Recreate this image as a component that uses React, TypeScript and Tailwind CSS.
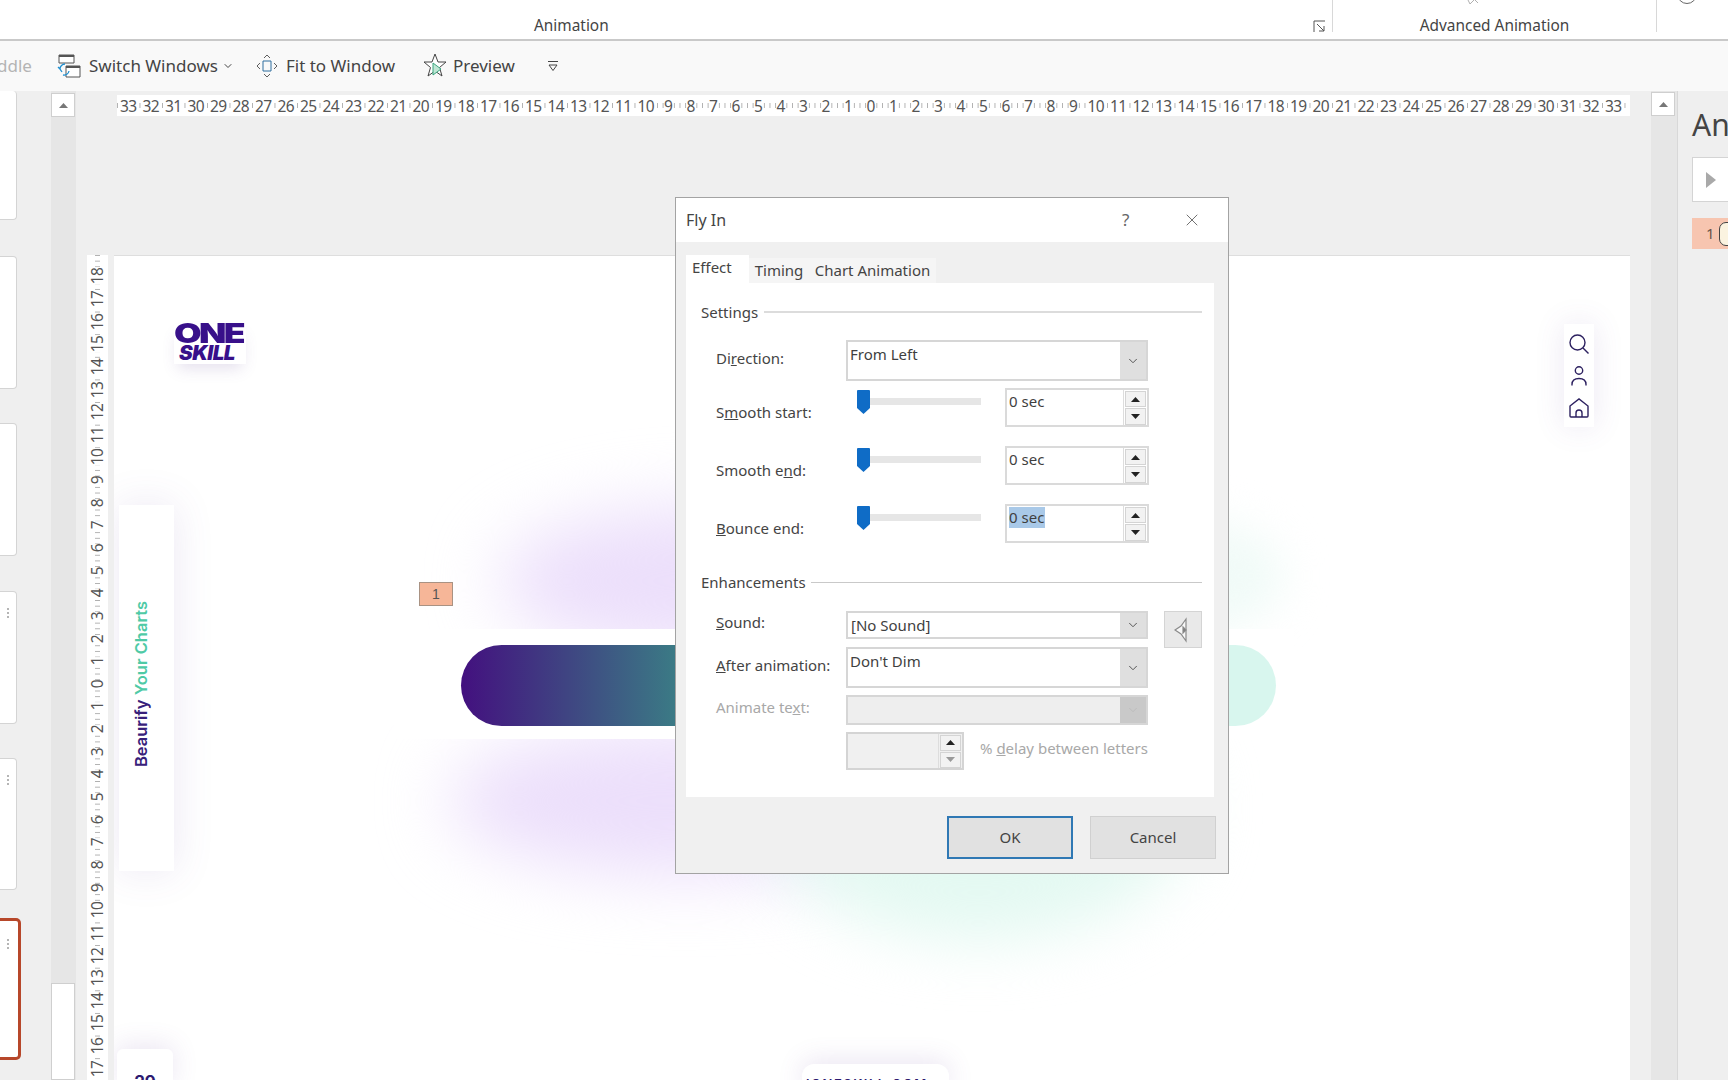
import React from 'react';
import { ChevronDown, X } from 'lucide-react';

const hRuler = [
  33, 32, 31, 30, 29, 28, 27, 26, 25, 24, 23, 22, 21, 20, 19, 18, 17, 16, 15, 14, 13, 12, 11, 10, 9, 8, 7, 6, 5, 4, 3, 2, 1,
  0, 1, 2, 3, 4, 5, 6, 7, 8, 9, 10, 11, 12, 13, 14, 15, 16, 17, 18, 19, 20, 21, 22, 23, 24, 25, 26, 27, 28, 29, 30, 31, 32, 33,
];
const vRuler = [18, 17, 16, 15, 14, 13, 12, 11, 10, 9, 8, 7, 6, 5, 4, 3, 2, 1, 0, 1, 2, 3, 4, 5, 6, 7, 8, 9, 10, 11, 12, 13, 14, 15, 16, 17];

function Triangle({ up, className }: { up?: boolean; className?: string }) {
  return (
    <svg width="9" height="5" viewBox="0 0 9 5" className={className}>
      <path d={up ? 'M4.5 0L9 5H0z' : 'M0 0h9L4.5 5z'} fill="currentColor" />
    </svg>
  );
}

function Combo({ text, tall, disabled }: { text?: string; tall?: boolean; disabled?: boolean }) {
  return (
    <div className={`flex w-[302px] shrink-0 border-2 border-[#d6d6d6] ${disabled ? 'bg-[#eeeeee]' : 'bg-white'} ${tall ? 'h-[41px]' : disabled ? 'h-[30px]' : 'h-[28px]'}`}>
      <div className={`flex-1 text-[15px] text-[#3f3f3f] ${tall ? 'pl-[2px] pt-[1px]' : 'pl-[3px] leading-[24px]'}`}>{text}</div>
      <div className={`flex w-[26px] items-center justify-center ${disabled ? 'bg-[#c9c9c9] text-[#bcbcbc]' : 'bg-[#dfdfdf] text-[#555555]'}`}>
        <ChevronDown size={14} strokeWidth={1.7} />
      </div>
    </div>
  );
}

function SpinButtons({ disabled }: { disabled?: boolean }) {
  return (
    <div className="flex w-[24px] flex-col gap-[1px] border-l border-[#dddddd] pt-[1px] pl-[1px]">
      <div className="flex h-[16px] w-[21px] items-center justify-center border border-[#d4d4d4] bg-[#f2f2f2] text-[#222222]">
        <Triangle up />
      </div>
      <div className={`flex h-[17px] w-[21px] items-center justify-center border border-[#d4d4d4] bg-[#f2f2f2] ${disabled ? 'text-[#999999]' : 'text-[#222222]'}`}>
        <Triangle />
      </div>
    </div>
  );
}

function SliderRow({ label, selected, className }: { label: React.ReactNode; selected?: boolean; className?: string }) {
  return (
    <div className={`flex h-[39px] ${className ?? ''}`}>
      <div className="w-[161px] pl-[30px] pt-[13px] text-[15px] leading-[22px] whitespace-nowrap text-[#444444]">{label}</div>
      <div className="flex w-[158px] items-start pl-[10px] pt-[2px]">
        <svg width="13" height="24" viewBox="0 0 13 24" className="shrink-0">
          <path d="M1 0h11a1 1 0 0 1 1 1v17l-6.5 6L0 18V1a1 1 0 0 1 1-1z" fill="#0f6cc6" />
        </svg>
        <div className="mt-[8px] h-[7px] w-[111px] bg-[#e6e6e6]" />
      </div>
      <div className="flex h-[39px] w-[144px] border-2 border-[#dadada] bg-white">
        <div className="flex-1 pl-[2px] pt-[1px] text-[15px] leading-[21px] text-[#3f3f3f]">
          <span className={selected ? 'inline-block bg-[#a9c9e8] pr-[1px]' : ''}>0 sec</span>
        </div>
        <SpinButtons />
      </div>
    </div>
  );
}

function Dialog() {
  return (
    <div className="absolute left-[675px] top-[197px] flex h-[677px] w-[554px] flex-col border border-[#a3a3a3] bg-[#f0f0f0] font-['Noto_Sans',sans-serif]">
      <div className="flex h-[44px] shrink-0 items-center bg-white pl-[10px] text-[#444444]">
        <div className="w-[436px] text-[16px]">Fly In</div>
        <div className="w-[60px] text-[17px] text-[#666666]">?</div>
        <X size={20} strokeWidth={1} className="text-[#555555]" />
      </div>
      <div className="flex flex-1 flex-col pl-[10px]">
        <div className="mt-[13px] flex h-[28px] items-end text-[15px] text-[#444444]">
          <div className="flex h-[28px] w-[63px] items-center bg-white pb-[3px] pl-[6px]">Effect</div>
          <div className="flex h-[25px] w-[60px] items-center justify-center bg-[#f5f5f5] pb-[1px]">Timing</div>
          <div className="flex h-[25px] w-[127px] items-center justify-center bg-[#f5f5f5] pb-[1px]">Chart Animation</div>
        </div>
        <div className="h-[514px] w-[528px] bg-white pt-[19px] text-[15px] text-[#444444]">
          <div className="flex h-[20px] items-center pl-[15px]">
            <span>Settings</span>
            <div className="ml-[6px] mr-[12px] h-[2px] flex-1 bg-[#dcdcdc]" />
          </div>
          <div className="mt-[18px] flex">
            <div className="w-[160px] pl-[30px] pt-[7px] leading-[22px] whitespace-nowrap">
              Di<u>r</u>ection:
            </div>
            <Combo text="From Left" tall />
          </div>
          <SliderRow className="mt-[7px]" label={<>S<u>m</u>ooth start:</>} />
          <SliderRow className="mt-[19px]" label={<>Smooth e<u>n</u>d:</>} />
          <SliderRow className="mt-[19px]" label={<><u>B</u>ounce end:</>} selected />
          <div className="mt-[29px] flex h-[20px] items-center pl-[15px]">
            <span>Enhancements</span>
            <div className="ml-[5px] mr-[12px] h-[1px] flex-1 bg-[#c9c9c9]" />
          </div>
          <div className="mt-[19px] flex h-[28px] items-start">
            <div className="w-[160px] pl-[30px] leading-[22px] whitespace-nowrap">
              <u>S</u>ound:
            </div>
            <Combo text="[No Sound]" />
            <div className="ml-[16px] flex h-[37px] w-[38px] shrink-0 items-center justify-center border border-[#d4d4d4] bg-[#e9e9e9]">
              <svg width="18" height="26" viewBox="0 0 18 26" fill="none" stroke="#8a8a8a" strokeWidth="1.2">
                <path d="M1 13l6-4 5-7v22l-5-7z" fill="#f7f7f7" />
                <path d="M9 10l3 3-3 3z" fill="#777777" />
              </svg>
            </div>
          </div>
          <div className="mt-[8px] flex">
            <div className="w-[160px] pl-[30px] pt-[7px] leading-[22px] whitespace-nowrap">
              <u>A</u>fter animation:
            </div>
            <Combo text="Don't Dim" tall />
          </div>
          <div className="mt-[7px] flex">
            <div className="w-[160px] pl-[30px] pt-[1px] leading-[22px] whitespace-nowrap text-[#a8a8a8]">
              Animate te<u>x</u>t:
            </div>
            <Combo disabled />
          </div>
          <div className="mt-[7px] flex">
            <div className="ml-[160px] flex h-[38px] w-[118px] border-2 border-[#d4d4d4] bg-[#f0f0f0]">
              <div className="flex-1" />
              <SpinButtons disabled />
            </div>
            <div className="ml-[16px] pt-[5px] leading-[22px] whitespace-nowrap text-[#a8a8a8]">
              % <u>d</u>elay between letters
            </div>
          </div>
        </div>
        <div className="mt-[19px] flex w-[530px] justify-end gap-[17px] text-[15px] text-[#444444]">
          <div className="flex h-[43px] w-[126px] items-center justify-center border-2 border-[#2f78b4] bg-[#e1e1e1]">OK</div>
          <div className="flex h-[43px] w-[126px] items-center justify-center border border-[#d0d0d0] bg-[#e1e1e1]">Cancel</div>
        </div>
      </div>
    </div>
  );
}

function Slide() {
  return (
    <div className="relative flex-1 overflow-hidden border-t border-[#dedede] bg-white font-['Inter',sans-serif]">
      {/* soft glows behind the pill */}
      <div className="absolute left-[385px] top-[250px] h-[150px] w-[420px] rounded-[50%] bg-[#ecdffb] blur-[34px]" />
      <div className="absolute left-[335px] top-[470px] h-[150px] w-[470px] rounded-[50%] bg-[#ecdffb] blur-[34px]" />
      <div className="absolute left-[650px] top-[420px] h-[265px] w-[430px] rounded-[50%] bg-[#e4f9f2] blur-[30px]" />
      <div className="absolute left-[1000px] top-[265px] h-[110px] w-[170px] rounded-[50%] bg-[#f1fbf8] blur-[20px]" />
      <div className="absolute left-[280px] top-[373px] h-[110px] w-[900px] bg-white" />
      <div className="absolute left-[347px] top-[389px] h-[81px] w-[815px] rounded-full bg-[linear-gradient(90deg,#43107f_0%,#3b7985_26%,#d8f6ee_94%,#d8f6ee_100%)]" />

      <div className="absolute left-[305px] top-[326px] flex h-[24px] w-[34px] items-center justify-center border border-[#a99283] bg-[#f6b698] font-['Liberation_Sans',sans-serif] text-[14px] text-[#555555]">1</div>

      <div className="absolute left-[60px] top-[68px] h-[40px] w-[72px] shadow-[0_8px_16px_-4px_rgba(100,70,150,0.18)]">
        <div className="-mt-[2px] h-[21px] origin-left scale-x-[1.32] text-[27px] leading-[24px] font-black tracking-[-2px] text-[#38108a]">ONE</div>
        <div className="ml-[5px] h-[18px] text-[20.500px] leading-[20px] font-black italic tracking-[-0.5px] text-[#38108a]">SKILL</div>
      </div>

      <div className="absolute left-[5px] top-[249px] flex h-[366px] w-[55px] items-center justify-center bg-white shadow-[0_0_40px_rgba(110,80,160,0.13)]">
        <div className="-translate-x-[5px] -translate-y-[4px] rotate-180 text-[16.5px] font-semibold whitespace-nowrap text-[#37207a] [writing-mode:vertical-rl]">
          Beaurify <span className="text-[#4fcaa6]">Your Charts</span>
        </div>
      </div>

      <div className="absolute left-[1450px] top-[68px] flex h-[103px] w-[30px] flex-col items-center gap-[12px] bg-white pt-[10px] shadow-[0_0_30px_rgba(110,80,160,0.13)]">
        <svg width="20" height="20" viewBox="0 0 20 20" fill="none" stroke="#2d2160" strokeWidth="1.4">
          <circle cx="8.5" cy="8.5" r="7.5" />
          <path d="M14 14l5.500 5.500" />
        </svg>
        <svg width="16" height="20" viewBox="0 0 16 20" fill="none" stroke="#2d2160" strokeWidth="1.4">
          <circle cx="8" cy="4.500" r="3.700" />
          <path d="M1 19.500v-1c0-4 3-6 7-6s7 2 7 6v1" />
        </svg>
        <svg width="20" height="20" viewBox="0 0 20 20" fill="none" stroke="#2d2160" strokeWidth="1.4">
          <path d="M1 8l9-7 9 7v10a1 1 0 0 1-1 1H2a1 1 0 0 1-1-1z" />
          <path d="M7 19v-4a3 3 0 0 1 6 0v4" />
        </svg>
      </div>

      <div className="absolute left-[3px] top-[793px] h-[40px] w-[56px] rounded-t-md bg-white text-center text-[17px] leading-[66px] font-bold text-[#2d1a70] shadow-[0_-4px_26px_rgba(110,80,160,0.14)]">29</div>
      <div className="absolute left-[688px] top-[808px] h-[30px] w-[147px] rounded-t-xl bg-white pt-[9px] text-[13px] leading-[22px] font-semibold tracking-[1.5px] whitespace-nowrap text-[#2d1a70] shadow-[0_-4px_26px_rgba(110,80,160,0.14)]">JONESKILL.COM</div>
    </div>
  );
}

function Thumb({ height, top, first, dots }: { height: string; top: string; first?: boolean; dots?: boolean }) {
  return (
    <div className={`${height} ${top} w-[17px] rounded-r-[4px] border border-l-0 ${first ? 'border-t-0' : ''} border-[#d4d4d4] bg-white pl-[7px] pt-[16px]`}>
      {dots && (
        <div className="flex flex-col gap-[2px]">
          <div className="h-[2px] w-[2px] bg-[#b5b5b5]" />
          <div className="h-[2px] w-[2px] bg-[#b5b5b5]" />
          <div className="h-[2px] w-[2px] bg-[#b5b5b5]" />
        </div>
      )}
    </div>
  );
}

export default function App() {
  return (
    <div className="relative flex h-[1080px] w-[1728px] flex-col overflow-hidden bg-[#efefef] font-['Noto_Sans',sans-serif] text-[#444444]">
      {/* ribbon */}
      <div className="flex h-[39px] shrink-0 bg-white text-[15.4px]">
        <div className="flex w-[1332px] items-start">
          <div className="ml-[534px] pt-[15px] leading-[22px]">Animation</div>
          <svg width="13" height="13" viewBox="0 0 13 13" fill="none" stroke="#555555" className="ml-auto mr-[6px] mt-[20px]">
            <path d="M1 12V1h11" />
            <path d="M4 4l7 7M11 6v5H6" />
          </svg>
        </div>
        <div className="relative h-[32px] w-[325px] border-x border-[#d8d8d8] pt-[15px] text-center leading-[22px]">
          Advanced Animation
          <svg width="16" height="6" viewBox="0 0 16 6" fill="none" stroke="#b0b0b0" className="absolute left-[132px] top-0">
            <path d="M3 0l2 4 4-4M10 0l3 3" />
          </svg>
        </div>
        <div className="ml-[20px] -mt-[16px] h-[20px] w-[20px] rounded-full border border-[#666666]" />
      </div>
      <div className="h-[2px] shrink-0 bg-[#c9c9c9]" />

      {/* quick access */}
      <div className="flex h-[50px] shrink-0 items-center bg-[#f9f9f9] text-[17px] text-[#444444]">
        <span className="-ml-[3px] w-[60px] text-[#b4b4b4]">ddle</span>
        <svg width="24" height="24" viewBox="0 0 24 24" fill="none" className="shrink-0">
          <path d="M2 1h15v8H2z" fill="#ffffff" stroke="#555555" />
          <path d="M2 1h15v2H2z" fill="#555555" />
          <path d="M9 12h14v11H9z" fill="#ffffff" stroke="#555555" />
          <path d="M9 12h14v2H9z" fill="#555555" />
          <path d="M8 10a5 5 0 0 0-5 5l2 3M3 15l-2-2M6 21a5 5 0 0 0 6-4" stroke="#1f8fd0" strokeWidth="1.3" />
        </svg>
        <span className="ml-[8px]">Switch Windows</span>
        <ChevronDown size={12} className="ml-[4px]" />
        <svg width="22" height="24" viewBox="0 0 22 24" fill="none" stroke="#5e5e5e" className="ml-[22px] shrink-0">
          <path d="M7 7h8v10H7z" stroke="#2f6f9f" />
          <path d="M8 4l3-3 3 3M8 20l3 3 3-3M4 9l-3 3 3 3M18 9l3 3-3 3" />
        </svg>
        <span className="ml-[8px]">Fit to Window</span>
        <svg width="24" height="26" viewBox="0 0 24 26" fill="none" className="ml-[28px] shrink-0">
          <path d="M12 1l3 8h8l-6.500 5.500L19 23l-7-5-7 5 2.500-8.500L1 9h8z" fill="#ffffff" stroke="#444444" />
          <path d="M10 10v12l8-6z" fill="#bfe6d4" stroke="#3aa57e" />
        </svg>
        <span className="ml-[6px]">Preview</span>
        <svg width="10" height="12" viewBox="0 0 10 12" className="ml-[33px]" fill="none" stroke="#444444">
          <path d="M0 1.500h10M1 5h8L5 10.500z" />
        </svg>
      </div>

      {/* work area */}
      <div className="flex min-h-0 flex-1">
        <div className="flex w-[51px] shrink-0 flex-col">
          <Thumb height="h-[129px]" top="" first />
          <Thumb height="h-[133px]" top="mt-[36px]" />
          <Thumb height="h-[133px]" top="mt-[34px]" />
          <Thumb height="h-[133px]" top="mt-[35px]" dots />
          <Thumb height="h-[132px]" top="mt-[34px]" dots />
          <div className="mt-[28px] h-[142px] w-[21px] rounded-r-[5px] border-[3px] border-l-0 border-[#b7472a] bg-white pl-[7px] pt-[18px]">
            <div className="flex flex-col gap-[2px]">
              <div className="h-[2px] w-[2px] bg-[#b5b5b5]" />
              <div className="h-[2px] w-[2px] bg-[#b5b5b5]" />
              <div className="h-[2px] w-[2px] bg-[#b5b5b5]" />
            </div>
          </div>
        </div>
        <div className="flex w-[25px] shrink-0 flex-col bg-[#e6e6e6] pt-[2px]">
          <div className="flex h-[24px] w-[24px] items-center justify-center border border-[#cfcfcf] bg-white text-[#777777]">
            <Triangle up />
          </div>
          <div className="flex-1" />
          <div className="h-[97px] w-[24px] border border-[#cfcfcf] bg-white" />
        </div>

        <div className="flex w-[1575px] shrink-0 flex-col">
          <div className="ml-[41px] mt-[4px] flex h-[21px] w-[1513px] shrink-0 items-center bg-white bg-[linear-gradient(90deg,#b0b0b0_1px,transparent_1px)] bg-[length:5.625px_5px] bg-[position:0_center] text-[15.500px] tracking-[-0.6px] text-[#555555] [background-repeat:repeat-x]">
            {hRuler.map((n, i) => (
              <div key={i} className="flex w-[22.5px] shrink-0 justify-center">
                <span className="bg-white leading-[18px]">{n}</span>
              </div>
            ))}
          </div>
          <div className="mt-[139px] flex min-h-0 flex-1">
            <div className="ml-[11px] h-full w-[21px] shrink-0 overflow-hidden bg-white bg-[linear-gradient(180deg,#b0b0b0_1px,transparent_1px)] bg-[length:5px_5.663px] bg-[position:center_0] pt-[10px] text-[15.500px] tracking-[-0.6px] text-[#555555] [background-repeat:repeat-y]">
              {vRuler.map((n, i) => (
                <div key={i} className="flex h-[22.65px] items-center justify-center">
                  <span className="-rotate-90 bg-white leading-[16px]">{n}</span>
                </div>
              ))}
            </div>
            <div className="ml-[6px] flex w-[1516px] shrink-0">
              <Slide />
            </div>
          </div>
        </div>

        <div className="flex w-[26px] shrink-0 flex-col bg-[#e6e6e6] pt-[1px]">
          <div className="flex h-[24px] w-[24px] items-center justify-center border border-[#cfcfcf] bg-white text-[#777777]">
            <Triangle up />
          </div>
        </div>
        <div className="flex flex-1 flex-col overflow-hidden border-l border-[#d8d8d8] pl-[14px]">
          <div className="mt-[15px] h-[38px] text-[30px] leading-[38px] whitespace-nowrap text-[#444444]">Animation Pane</div>
          <div className="mt-[13px] flex h-[45px] w-[60px] items-center border border-[#d4d4d4] bg-white pl-[13px]">
            <svg width="10" height="16" viewBox="0 0 10 16" fill="#a9a9a9">
              <path d="M0 0l10 8-10 8z" />
            </svg>
          </div>
          <div className="mt-[16px] flex h-[31px] w-[60px] items-center gap-[4px] bg-[#f7c5b0] pl-[14px] text-[15px] text-[#6a5448]">
            <span>1</span>
            <div className="h-[24px] w-[16px] shrink-0 rounded-[7px] border border-[#444444] bg-[#fbf3e0]" />
          </div>
        </div>
      </div>

      <Dialog />
    </div>
  );
}
